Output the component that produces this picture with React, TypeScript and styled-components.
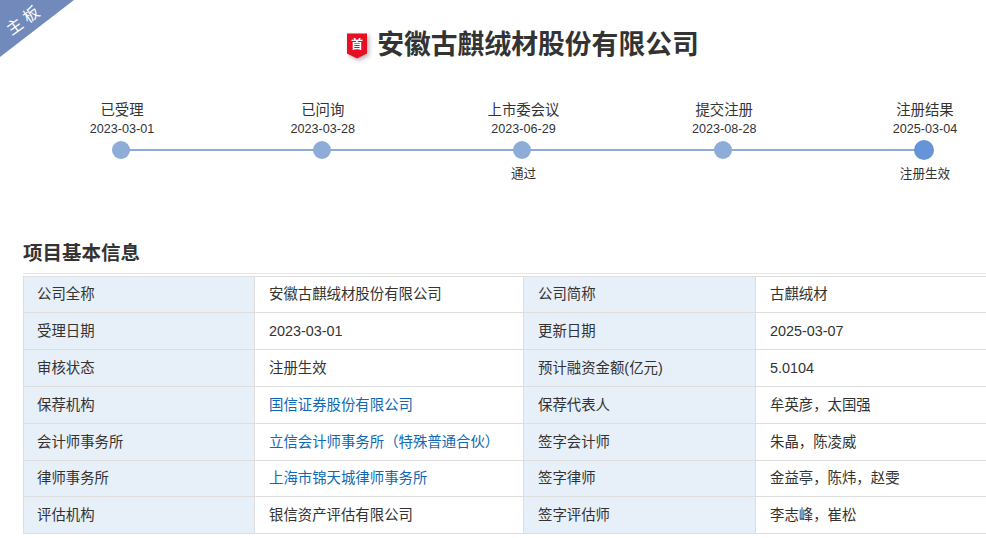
import styled, { createGlobalStyle } from 'styled-components';

const GlobalStyle = createGlobalStyle`
  html, body {
    margin: 0;
    padding: 0;
    background: #fff;
    overflow: hidden;
    height: 538px;
  }
  body {
    font-family: "Liberation Sans", "Noto Sans CJK SC", sans-serif;
    color: #333;
  }
`;

const Page = styled.div`
  position: relative;
  width: 1000px;
  padding: 0 0 0 23px;
`;

const Ribbon = styled.div`
  position: absolute;
  left: 0;
  top: 0;
  width: 74px;
  height: 57px;
  background: #7189bb;
  clip-path: polygon(0 0, 100% 0, 0 100%);
  span {
    position: absolute;
    left: 5px;
    top: 12px;
    color: #fff;
    font-size: 16px;
    line-height: 18px;
    white-space: nowrap;
    transform: rotate(-36deg);
  }
`;

const TitleRow = styled.div`
  display: flex;
  justify-content: center;
  align-items: center;
  gap: 8px;
  height: 90px;
  box-sizing: border-box;
  padding-bottom: 1px;
`;

const BadgeIcon = styled.svg`
  margin-top: 2px;
  overflow: visible;
  filter: drop-shadow(2px 2px 2px rgba(0, 0, 0, 0.3));
`;

const Title = styled.h1`
  margin: 0;
  font-size: 26.8px;
  line-height: 36px;
  font-weight: bold;
  color: #333;
`;

const Timeline = styled.ol`
  display: grid;
  grid-template-columns: repeat(5, 200.75px);
  list-style: none;
  margin: 0 0 0 -2.4px;
  padding: 0;
  height: 150px;
`;

const Step = styled.li<{ $last?: boolean }>`
  position: relative;
  display: flex;
  flex-direction: column;
  align-items: center;
  padding-top: 10px;
  &::after {
    content: '';
    display: ${(p) => (p.$last ? 'none' : 'block')};
    position: absolute;
    left: 50%;
    width: 100%;
    top: 59px;
    height: 2px;
    background: #8dacd8;
  }
`;

const StepName = styled.div`
  margin-left: 2px;
  font-size: 14.4px;
  line-height: 20px;
  color: #333;
`;

const StepDate = styled.div`
  font-size: 12.6px;
  line-height: 16px;
  margin: 1px 0 0 2px;
  color: #333;
`;

const Dot = styled.div<{ $active?: boolean }>`
  position: relative;
  z-index: 1;
  box-sizing: border-box;
  width: ${(p) => (p.$active ? 20 : 18)}px;
  height: ${(p) => (p.$active ? 20 : 18)}px;
  margin-top: ${(p) => (p.$active ? 3 : 4)}px;
  margin-bottom: ${(p) => (p.$active ? 0 : 1)}px;
  border-radius: 50%;
  background: ${(p) => (p.$active ? '#6594d8' : '#8dacd8')};
`;

const StepNote = styled.div`
  font-size: 12.6px;
  line-height: 16px;
  margin: 6px 0 0 2px;
  color: #333;
`;

const SectionTitle = styled.h2`
  margin: 0;
  font-size: 19.5px;
  line-height: 26px;
  height: 34px;
  box-sizing: border-box;
  font-weight: bold;
  color: #333;
  border-bottom: 1px solid #e3e8ef;
`;

const InfoTable = styled.table`
  width: 1000px;
  margin-top: 2px;
  border-collapse: collapse;
  table-layout: fixed;
  font-size: 14.4px;
  color: #333;
`;

const TableRow = styled.tr<{ $height: number }>`
  height: ${(p) => p.$height}px;
`;

const Cell = styled.td`
  box-sizing: border-box;
  padding: 0 14px 1px;
  border: 1px solid #dedede;
  line-height: 20px;
  white-space: nowrap;
`;

const LabelCell = styled(Cell)<{ $inset: number }>`
  padding-left: ${(p) => p.$inset}px;
  background: #e7eff8;
`;

const OrgLink = styled.a`
  color: #0f69b4;
  text-decoration: none;
`;

const steps = [
  { name: '已受理', date: '2023-03-01' },
  { name: '已问询', date: '2023-03-28' },
  { name: '上市委会议', date: '2023-06-29', note: '通过' },
  { name: '提交注册', date: '2023-08-28' },
  { name: '注册结果', date: '2025-03-04', note: '注册生效' },
];

type Row = { a: string; b: string; bLink?: boolean; c: string; d: string; h: number };

const rows: Row[] = [
  { a: '公司全称', b: '安徽古麒绒材股份有限公司', c: '公司简称', d: '古麒绒材', h: 36 },
  { a: '受理日期', b: '2023-03-01', c: '更新日期', d: '2025-03-07', h: 37 },
  { a: '审核状态', b: '注册生效', c: '预计融资金额(亿元)', d: '5.0104', h: 37 },
  { a: '保荐机构', b: '国信证券股份有限公司', bLink: true, c: '保荐代表人', d: '牟英彦，太国强', h: 37 },
  { a: '会计师事务所', b: '立信会计师事务所（特殊普通合伙）', bLink: true, c: '签字会计师', d: '朱晶，陈凌威', h: 37 },
  { a: '律师事务所', b: '上海市锦天城律师事务所', bLink: true, c: '签字律师', d: '金益亭，陈炜，赵雯', h: 36 },
  { a: '评估机构', b: '银信资产评估有限公司', c: '签字评估师', d: '李志峰，崔松', h: 37 },
];

function FirstBadge() {
  return (
    <BadgeIcon width="22" height="30" viewBox="0 0 22 30">
      <path d="M0 2.5 H20 V22.5 L10 27.5 L0 22.5 Z" fill="#e60f23" />
      <text
        x="10"
        y="18"
        textAnchor="middle"
        fontSize="12"
        fontWeight="bold"
        fill="#fff"
        fontFamily='"Noto Sans CJK SC", sans-serif'
      >
        首
      </text>
    </BadgeIcon>
  );
}

export default function App() {
  return (
    <Page>
      <GlobalStyle />
      <Ribbon>
        <span>主 板</span>
      </Ribbon>
      <TitleRow>
        <FirstBadge />
        <Title>安徽古麒绒材股份有限公司</Title>
      </TitleRow>
      <Timeline>
        {steps.map((s, i) => (
          <Step key={s.name} $last={i === steps.length - 1}>
            <StepName>{s.name}</StepName>
            <StepDate>{s.date}</StepDate>
            <Dot $active={i === steps.length - 1} />
            {s.note && <StepNote>{s.note}</StepNote>}
          </Step>
        ))}
      </Timeline>
      <SectionTitle>项目基本信息</SectionTitle>
      <InfoTable>
        <colgroup>
          <col style={{ width: 231 }} />
          <col style={{ width: 269 }} />
          <col style={{ width: 232 }} />
          <col style={{ width: 268 }} />
        </colgroup>
        <tbody>
          {rows.map((r) => (
            <TableRow key={r.a} $height={r.h}>
              <LabelCell $inset={13}>{r.a}</LabelCell>
              <Cell>{r.bLink ? <OrgLink href="#">{r.b}</OrgLink> : r.b}</Cell>
              <LabelCell $inset={14}>{r.c}</LabelCell>
              <Cell>{r.d}</Cell>
            </TableRow>
          ))}
        </tbody>
      </InfoTable>
    </Page>
  );
}
